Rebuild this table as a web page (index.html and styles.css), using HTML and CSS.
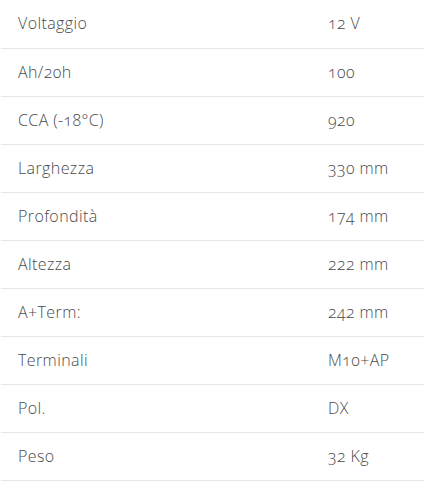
FILE: index.html
```html
<!DOCTYPE html>
<html lang="it">
<head>
<meta charset="utf-8">
<link rel="stylesheet" href="styles.css">
</head>
<body>
<table class="specs">
  <tbody>
    <tr><td class="label">Voltaggio</td><td class="value">12 V</td></tr>
    <tr><td class="label">Ah/20h</td><td class="value">100</td></tr>
    <tr><td class="label">CCA (-18°C)</td><td class="value">920</td></tr>
    <tr><td class="label">Larghezza</td><td class="value">330 mm</td></tr>
    <tr><td class="label">Profondità</td><td class="value">174 mm</td></tr>
    <tr><td class="label">Altezza</td><td class="value">222 mm</td></tr>
    <tr><td class="label">A+Term:</td><td class="value">242 mm</td></tr>
    <tr><td class="label">Terminali</td><td class="value">M10+AP</td></tr>
    <tr><td class="label">Pol.</td><td class="value">DX</td></tr>
    <tr><td class="label">Peso</td><td class="value">32 Kg</td></tr>
  </tbody>
</table>
</body>
</html>
```

FILE: styles.css
```css
html, body {
  margin: 0;
  padding: 0;
  background: #ffffff;
}
body {
  padding-left: 1px;
}
.specs {
  width: 423px;
  border-collapse: collapse;
  font-family: "Open Sans", "Lato", sans-serif;
  font-weight: 300;
  font-size: 16px;
  letter-spacing: 0.4px;
  color: #4a4a4a;
  font-variant-numeric: oldstyle-nums;
}
.specs td {
  height: 48px;
  padding: 0 0 1px 17px;
  border-bottom: 1px solid #e6e6e6;
  vertical-align: middle;
  box-sizing: border-box;
}
.specs .label {
  width: 310px;
}
```
